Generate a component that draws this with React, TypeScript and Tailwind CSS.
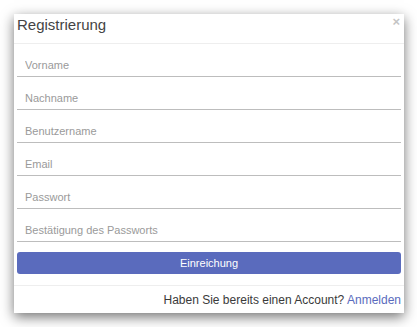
import React from "react";

const fields = [
  "Vorname",
  "Nachname",
  "Benutzername",
  "Email",
  "Passwort",
  "Bestätigung des Passworts",
];

export default function App(): React.JSX.Element {
  return (
    <div className="w-[417px] h-[327px] bg-white pt-[14px] pl-[14px] font-['Liberation_Sans',Arial,sans-serif]">
      <div className="w-[390px] h-[299px] bg-white shadow-[0_4px_12px_rgba(0,0,0,0.55)] flex flex-col">
        {/* Header */}
        <div className="relative h-[30px] border-b border-[#eeeeee] px-[3px] flex items-center">
          <span className="text-[15px] text-[#444444] leading-none -mt-[9px]">Registrierung</span>
          <span className="absolute right-[4px] top-[1px] text-[13px] font-bold text-[#c4c4c4] leading-none">×</span>
        </div>

        {/* Body */}
        <div className="px-[3px] flex flex-col">
          {fields.map((f) => (
            <input
              key={f}
              placeholder={f}
              className="h-[33px] w-full border-b border-[#bdbdbd] pl-[8px] pt-[10px] text-[11px] text-[#333] placeholder:text-[#9a9a9a] outline-none"
            />
          ))}
          <button className="mt-[10px] h-[22px] w-full rounded-[3px] bg-[#5a6bbd] text-white text-[11px]">
            Einreichung
          </button>
        </div>

        {/* Footer */}
        <div className="mt-[11px] border-t border-[#eeeeee] flex-1 flex items-center justify-end px-[3px]">
          <span className="text-[12px] text-[#3a3a3a]">
            Haben Sie bereits einen Account? <span className="text-[#5a6bbd]">Anmelden</span>
          </span>
        </div>
      </div>
    </div>
  );
}
